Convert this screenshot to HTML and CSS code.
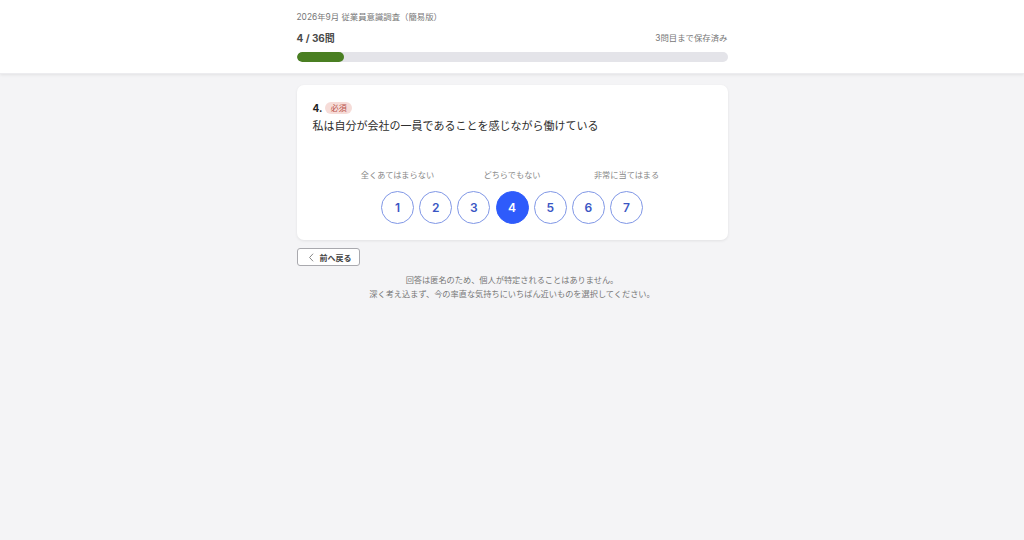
FILE: index.html
```html
<!DOCTYPE html>
<html lang="ja">
<head>
<meta charset="utf-8">
<title>従業員意識調査</title>
<link rel="stylesheet" href="styles.css">
</head>
<body>
<header class="top">
  <div class="wrap">
    <div class="survey-title">2026年9月 従業員意識調査（簡易版）</div>
    <div class="progress-row">
      <span class="count">4 / 36問</span>
      <span class="saved">3問目まで保存済み</span>
    </div>
    <div class="bar"><div class="bar-fill" style="width: 11.1%"></div></div>
  </div>
</header>
<main class="wrap">
  <section class="card">
    <div class="q-head"><span class="q-num">4.</span><span class="badge">必須</span></div>
    <div class="q-text">私は自分が会社の一員であることを感じながら働けている</div>
    <div class="scale">
      <div class="labels">
        <span class="lbl c1">全くあてはまらない</span>
        <span class="lbl c4">どちらでもない</span>
        <span class="lbl c7">非常に当てはまる</span>
      </div>
      <div class="options">
        <button class="opt">1</button>
        <button class="opt">2</button>
        <button class="opt">3</button>
        <button class="opt selected">4</button>
        <button class="opt">5</button>
        <button class="opt">6</button>
        <button class="opt">7</button>
      </div>
    </div>
  </section>
  <div class="nav">
    <button class="back"><svg class="chev" viewBox="0 0 8 10" width="7" height="9"><path d="M5.5 1 L1.8 5 L5.5 9" fill="none" stroke="#777" stroke-width="1" stroke-linecap="round" stroke-linejoin="round"/></svg><span>前へ戻る</span></button>
  </div>
  <p class="note">回答は匿名のため、個人が特定されることはありません。<br>深く考え込まず、今の率直な気持ちにいちばん近いものを選択してください。</p>
</main>
</body>
</html>
```
FILE: styles.css
```css
* { box-sizing: border-box; }
html, body { margin: 0; padding: 0; }
body {
  background: #f4f4f6;
  font-family: "Inter", "Noto Sans CJK JP", sans-serif;
  color: #333;
  min-height: 540px;
}
.wrap { width: 431px; margin: 0 auto; }
.top {
  background: #fff;
  box-shadow: 0 1px 3px rgba(0,0,0,0.08);
  border-bottom: 1px solid #ececef;
}
.top .wrap { padding: 10px 0 11px; }
.survey-title { font-size: 8.4px; line-height: 14px; color: #777; }
.progress-row {
  display: flex; justify-content: space-between; align-items: center;
  margin-top: 6px; line-height: 16px;
}
.count { font-size: 10px; font-weight: 700; color: #4a4a4a; }
.saved { font-size: 8.4px; color: #777; }
.bar { margin-top: 6px; height: 10px; border-radius: 5px; background: #e4e4e9; overflow: hidden; }
.bar-fill { height: 100%; background: #4a7f22; border-radius: 5px; }
main.wrap { padding-top: 11px; }
.card {
  background: #fff; border-radius: 7px;
  box-shadow: 0 1px 3px rgba(0,0,0,0.08);
  padding: 16px 16px 16px;
}
.q-head { display: flex; align-items: center; gap: 3px; height: 14px; }
.q-num { font-size: 10px; font-weight: 700; color: #222; }
.badge {
  font-size: 8px; line-height: 12px; padding: 0 5.5px; border-radius: 6px;
  background: #f6dcd8; color: #b9534a;
}
.q-text { margin-top: 2px; font-size: 11px; line-height: 18px; color: #2e2e2e; }
.scale { margin-top: 33px; display: flex; flex-direction: column; align-items: center; }
.labels, .options {
  display: grid; grid-template-columns: repeat(7, 33px); column-gap: 5.2px;
}
.labels { height: 14px; }
.lbl {
  display: flex; justify-content: center; white-space: nowrap;
  font-size: 8.2px; line-height: 14px; color: #888;
}
.c1 { grid-column: 1; }
.c4 { grid-column: 4; }
.c7 { grid-column: 7; }
.options { margin-top: 9px; }
.opt {
  width: 33px; height: 33px; border-radius: 50%;
  border: 1px solid #8097e6; background: #fff; color: #3a56c4;
  font-family: "Inter", sans-serif; font-size: 12px; font-weight: 600;
  padding: 0; display: flex; align-items: center; justify-content: center;
}
.opt.selected { background: #2e5bfb; border-color: #2e5bfb; color: #fff; }
.nav { margin-top: 8px; display: flex; }
.back {
  height: 18px; width: 63px; padding: 0 0 0 10px;
  border: 1px solid #a9a9ae; border-radius: 3px; background: #fff;
  font-family: "Inter", "Noto Sans CJK JP", sans-serif;
  font-size: 8px; font-weight: 700; color: #444;
  display: flex; align-items: center; gap: 5px; white-space: nowrap;
}
.chev { flex: none; }
.note {
  margin: 7px 0 0; text-align: center;
  font-size: 8.2px; line-height: 14px; color: #777;
}
```
